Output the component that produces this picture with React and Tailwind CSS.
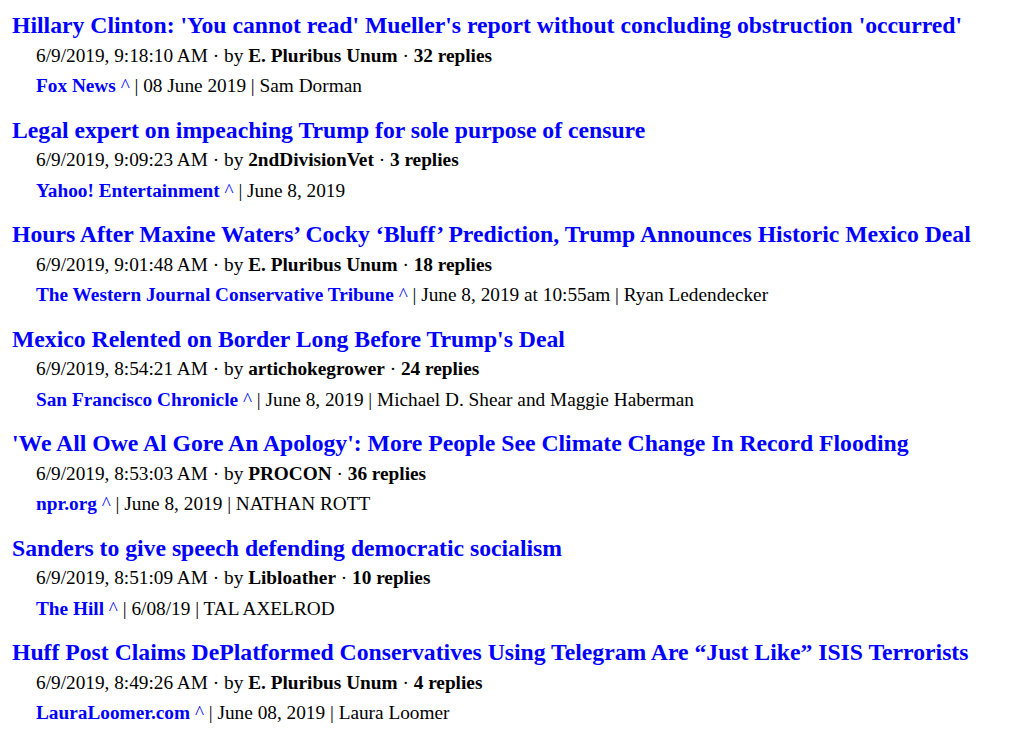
const items = [
  {
    title: "Hillary Clinton: 'You cannot read' Mueller's report without concluding obstruction 'occurred'",
    time: "6/9/2019, 9:18:10 AM",
    by: "E. Pluribus Unum",
    replies: "32 replies",
    source: "Fox News",
    rest: ["08 June 2019", "Sam Dorman"],
  },
  {
    title: "Legal expert on impeaching Trump for sole purpose of censure",
    time: "6/9/2019, 9:09:23 AM",
    by: "2ndDivisionVet",
    replies: "3 replies",
    source: "Yahoo! Entertainment",
    rest: ["June 8, 2019"],
  },
  {
    title: "Hours After Maxine Waters’ Cocky ‘Bluff’ Prediction, Trump Announces Historic Mexico Deal",
    time: "6/9/2019, 9:01:48 AM",
    by: "E. Pluribus Unum",
    replies: "18 replies",
    source: "The Western Journal Conservative Tribune",
    rest: ["June 8, 2019 at 10:55am", "Ryan Ledendecker"],
  },
  {
    title: "Mexico Relented on Border Long Before Trump's Deal",
    time: "6/9/2019, 8:54:21 AM",
    by: "artichokegrower",
    replies: "24 replies",
    source: "San Francisco Chronicle",
    rest: ["June 8, 2019", "Michael D. Shear and Maggie Haberman"],
  },
  {
    title: "'We All Owe Al Gore An Apology': More People See Climate Change In Record Flooding",
    time: "6/9/2019, 8:53:03 AM",
    by: "PROCON",
    replies: "36 replies",
    source: "npr.org",
    rest: ["June 8, 2019", "NATHAN ROTT"],
  },
  {
    title: "Sanders to give speech defending democratic socialism",
    time: "6/9/2019, 8:51:09 AM",
    by: "Libloather",
    replies: "10 replies",
    source: "The Hill",
    rest: ["6/08/19", "TAL AXELROD"],
  },
  {
    title: "Huff Post Claims DePlatformed Conservatives Using Telegram Are “Just Like” ISIS Terrorists",
    time: "6/9/2019, 8:49:26 AM",
    by: "E. Pluribus Unum",
    replies: "4 replies",
    source: "LauraLoomer.com",
    rest: ["June 08, 2019", "Laura Loomer"],
  },
];

export default function App() {
  return (
    <div className="min-h-[746px] bg-white pt-3 pl-3 text-black font-['Liberation_Serif',serif]">
      {items.map((it, i) => (
        <div key={i} className="mb-[20.5px]">
          <a href="#" className="block text-[23.7px] leading-[26px] font-bold text-[#0000ff]">
            {it.title}
          </a>
          <div className="mt-[7.5px] pl-6 text-[19.3px] leading-[20px]">
            {it.time} · by <b>{it.by}</b> · <b>{it.replies}</b>
          </div>
          <div className="mt-[10.5px] pl-6 text-[19.3px] leading-[20px]">
            <a href="#" className="font-bold text-[#0000ff]">{it.source}</a>{" "}
            <a href="#" className="text-[#0000ff]">^</a>
            {it.rest.map((r, j) => (
              <span key={j}> | {r}</span>
            ))}
          </div>
        </div>
      ))}
    </div>
  );
}
